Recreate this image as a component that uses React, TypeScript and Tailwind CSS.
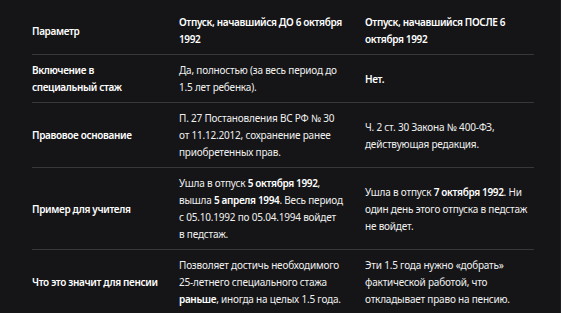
import React from "react";

const B = ({ children }: { children: React.ReactNode }) => (
  <b className="font-semibold tracking-[-0.35px] text-white">{children}</b>
);

const rows: { label: string; a: React.ReactNode; b: React.ReactNode }[] = [
  {
    label: "Включение в специальный стаж",
    a: <>Да, полностью (за весь период до 1.5 лет ребенка).</>,
    b: <B>Нет.</B>,
  },
  {
    label: "Правовое основание",
    a: <>П. 27 Постановления ВС РФ № 30 от{"\u00a0"}11.12.2012, сохранение ранее приобретенных прав.</>,
    b: <>Ч. 2 ст. 30 Закона № 400-ФЗ, действующая редакция.</>,
  },
  {
    label: "Пример для учителя",
    a: (
      <>
        Ушла в отпуск <B>5 октября 1992</B>, вышла <B>5 апреля 1994</B>. Весь период с 05.10.1992 по
        05.04.1994 войдет в{"\u00a0"}педстаж.
      </>
    ),
    b: (
      <>
        Ушла в отпуск <B>7 октября 1992</B>. Ни один день этого отпуска в педстаж не войдет.
      </>
    ),
  },
  {
    label: "Что это значит для пенсии",
    a: (
      <>
        Позволяет достичь необходимого 25-летнего специального стажа <B>раньше</B>, иногда на целых 1.5
        года.
      </>
    ),
    b: <>Эти 1.5 года нужно «добрать» фактической работой, что откладывает право на пенсию.</>,
  },
];

export default function App() {
  return (
    <div
      className="w-[561px] h-[313px] overflow-hidden bg-[#151517] border-r border-[#1e1e21] text-[#f0f0f0] text-[10px] leading-[17px] tracking-[-0.2px]"
      style={{ fontFamily: '"Noto Sans", "Open Sans", sans-serif' }}
    >
      <div className="ml-[32px] mt-[8px] w-[502px]">
        <div className="grid grid-cols-[147px_186px_169px] items-center border-b border-[#38383b] py-[6px] font-semibold tracking-[-0.35px] text-white">
          <div className="pr-[20px]">Параметр</div>
          <div className="pr-[16px]">Отпуск, начавшийся ДО 6 октября 1992</div>
          <div>Отпуск, начавшийся ПОСЛЕ 6 октября 1992</div>
        </div>
        {rows.map((r, i) => (
          <div
            key={i}
            className="grid grid-cols-[147px_186px_169px] items-center border-b border-[#38383b] pt-[7px] pb-[6px]"
          >
            <div className="pr-[20px] font-semibold tracking-[-0.35px] text-white">{r.label}</div>
            <div className="pr-[16px]">{r.a}</div>
            <div>{r.b}</div>
          </div>
        ))}
      </div>
    </div>
  );
}
